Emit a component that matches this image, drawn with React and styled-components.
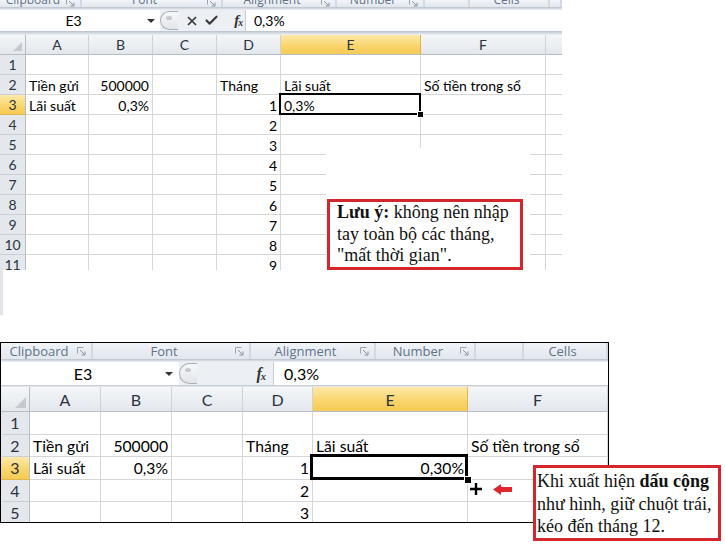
import React from 'react';
import styled, { createGlobalStyle, css } from 'styled-components';
import { X, Check } from 'lucide-react';

const GlobalStyle = createGlobalStyle`
  html, body { margin: 0; padding: 0; background: #fff; }
  body { font-family: Lato, "Open Sans", sans-serif; color: #000; }
`;

const Page = styled.div`
  position: relative;
  width: 725px;
  height: 546px;
  overflow: hidden;
  display: flex;
  flex-direction: column;
  align-items: flex-start;
`;

/* ---------- screenshot shells ---------- */
const TopShot = styled.div`
  position: relative;
  width: 562px;
  height: 270px;
  overflow: hidden;
  display: flex;
  flex-direction: column;
`;

const Stub = styled.div`
  width: 3px;
  height: 45px;
  background: #e1e4e9;
`;

const BottomWrap = styled.div`
  position: relative;
  margin-top: 27px;
`;

const Frame = styled.div`
  box-sizing: border-box;
  width: 609px;
  height: 181px;
  border: 1px solid #000;
  overflow: hidden;
  display: flex;
  flex-direction: column;
`;

/* ---------- ribbon group labels ---------- */
const RibbonLabels = styled.div`
  display: flex;
  height: ${p => p.$h}px;
  flex: none;
  overflow: hidden;
  background: linear-gradient(#f1f4f8, #e2e7ee);
  font-family: "Open Sans", Lato, sans-serif;
  font-size: ${p => p.$fs}px;
  color: #617188;
`;

const Group = styled.div`
  box-sizing: border-box;
  width: ${p => p.$w}px;
  flex: none;
  display: flex;
  align-items: ${p => (p.$clip ? 'flex-end' : 'center')};
  border-right: 2px solid #d3d9e1;
  padding-right: 5px;
`;

const GroupLabel = styled.span`
  flex: 1;
  text-align: center;
  line-height: ${p => (p.$clip ? '20px' : '1')};
  margin-bottom: ${p => (p.$clip ? '-3px' : '0')};
  white-space: nowrap;
`;

const Launcher = () => (
  <svg width="9" height="9" viewBox="0 0 9 9" style={{ flex: 'none' }}>
    <path d="M0.5 0.5h6M0.5 0.5v6" stroke="#9aa6b5" fill="none" />
    <path d="M3 3l4.5 4.5M8 4.5v3.5H4.5" stroke="#8593a6" fill="none" />
  </svg>
);

const Divider = styled.div`
  height: ${p => p.$h}px;
  flex: none;
  background: linear-gradient(#b8c0ca, #d5dae0 50%, #eef0f3);
`;

/* ---------- formula bar ---------- */
const FormulaBar = styled.div`
  display: flex;
  height: ${p => p.$h}px;
  flex: none;
  background: #eceff3;
  font-size: ${p => p.$fs}px;
`;

const NameBox = styled.div`
  box-sizing: border-box;
  width: ${p => p.$w}px;
  flex: none;
  display: flex;
  align-items: center;
  background: #fff;
  padding-right: ${p => p.$pr}px;
`;

const NameText = styled.span`
  flex: 1;
  text-align: center;
`;

const DropArrow = styled.span`
  width: 0;
  height: 0;
  border-left: 4px solid transparent;
  border-right: 4px solid transparent;
  border-top: 4px solid #333;
`;

const Pill = styled.div`
  position: relative;
  box-sizing: border-box;
  width: ${p => p.$w}px;
  flex: none;
  margin: 1px 0;
  border: 1px solid #a9b0b9;
  border-right: none;
  border-radius: 12px 0 0 12px;
  background: linear-gradient(#f7f8fa, #e2e5e9);
  &::after {
    content: '';
    position: absolute;
    left: 5px;
    top: 4px;
    width: 6px;
    height: 4px;
    border-radius: 50%;
    background: #c4c9cf;
  }
`;

const Tools = styled.div`
  flex: 1;
  display: flex;
  align-items: center;
  justify-content: flex-end;
  gap: ${p => p.$gap}px;
  padding-right: ${p => p.$pr}px;
  color: #3b3b3b;
`;

const ToolIcon = styled.span`
  display: flex;
  margin-right: ${p => p.$mr || 0}px;
`;

const Fx = styled.span`
  font-family: "Liberation Serif", serif;
  font-style: italic;
  font-weight: bold;
  font-size: ${p => p.$fs}px;
  color: #333;
  letter-spacing: -1px;
  sub { font-size: 0.65em; vertical-align: -1px; }
`;

const Input = styled.div`
  box-sizing: border-box;
  width: ${p => p.$w}px;
  flex: none;
  display: flex;
  align-items: center;
  background: #fff;
  border-left: 1px solid #c9ced5;
  padding-left: ${p => p.$pl}px;
`;

/* ---------- grid ---------- */
const Grid = styled.div`
  display: grid;
  grid-template-columns: ${p => p.$cols};
  grid-template-rows: ${p => p.$headH}px;
  grid-auto-rows: ${p => p.$rowH}px;
  font-size: ${p => p.$fs}px;
`;

const headBg = css`
  background: linear-gradient(#f4f6f8, #e3e7ec);
`;
const selBg = css`
  background: linear-gradient(#fde9a8, #f9d46a 60%, #f6ca55);
`;

const Corner = styled.div`
  position: relative;
  ${headBg};
  border-right: 1px solid #b6bdc6;
  border-bottom: 1px solid #b6bdc6;
  &::after {
    content: '';
    position: absolute;
    right: 3px;
    bottom: 3px;
    border-left: ${p => p.$t}px solid transparent;
    border-bottom: ${p => p.$t}px solid #c5cad1;
  }
`;

const ColHead = styled.div`
  display: flex;
  align-items: center;
  justify-content: center;
  ${p => (p.$sel ? selBg : headBg)};
  border-right: 1px solid ${p => (p.$sel ? '#e2b54a' : '#cdd2d9')};
  border-bottom: 1px solid #b6bdc6;
  color: #2b3440;
  font-size: ${p => p.$fs}px;
`;

const RowHead = styled.div`
  display: flex;
  align-items: center;
  justify-content: center;
  ${p => (p.$sel ? selBg : css`background: #e4e8ed;`)};
  border-right: 1px solid #b6bdc6;
  border-bottom: 1px solid ${p => (p.$sel ? '#e2b54a' : '#cbd0d7')};
  color: #2b3440;
  font-size: ${p => p.$fs}px;
`;

const Cell = styled.div`
  position: relative;
  display: flex;
  align-items: center;
  justify-content: ${p => (p.$right ? 'flex-end' : 'flex-start')};
  padding: 1px 3px 0 3px;
  border-right: 1px solid #d6d6d6;
  border-bottom: 1px solid #d6d6d6;
  white-space: nowrap;
  min-width: 0;
  ${p =>
    p.$sel &&
    css`
      &::after {
        content: '';
        position: absolute;
        left: -${p.$sel}px;
        top: -${p.$sel}px;
        right: -1px;
        bottom: -1px;
        border: ${p.$sel}px solid #000;
        z-index: 2;
      }
      &::before {
        content: '';
        position: absolute;
        right: -${p.$sel + 2}px;
        bottom: -${p.$sel + 2}px;
        width: ${p.$sel + 3}px;
        height: ${p.$sel + 3}px;
        background: #000;
        border: 1px solid #fff;
        z-index: 3;
      }
    `}
`;

const Sheet = ({ cols, headH, rowH, fs, hfs, rows, selCol, selRow, selW, tri }) => (
  <Grid $cols={cols.map(c => c.w + 'px').join(' ')} $headH={headH} $rowH={rowH} $fs={fs}>
    <Corner $t={tri} />
    {cols.slice(1).map((c, i) => (
      <ColHead key={i} $sel={i === selCol} $fs={hfs}>{c.l}</ColHead>
    ))}
    {rows.map((r, ri) => (
      <React.Fragment key={ri}>
        <RowHead $sel={ri + 1 === selRow} $fs={hfs}>{ri + 1}</RowHead>
        {cols.slice(1).map((c, ci) => {
          const v = r[ci];
          const isSel = ri + 1 === selRow && ci === selCol;
          return (
            <Cell key={ci} $right={v && v.r} $sel={isSel ? selW : 0}>
              {v ? v.t : ''}
            </Cell>
          );
        })}
      </React.Fragment>
    ))}
  </Grid>
);

/* ---------- callouts ---------- */
const Patch = styled.div`
  position: absolute;
  left: 326px;
  top: 148px;
  width: 204px;
  height: 122px;
  background: #fff;
  display: flex;
  flex-direction: column;
  justify-content: flex-end;
  padding-left: 1px;
  box-sizing: border-box;
  z-index: 5;
`;

const NoteBox = styled.div`
  box-sizing: border-box;
  width: ${p => p.$w}px;
  height: ${p => p.$h}px;
  border: 3px solid #d6262d;
  background: #fff;
  padding: ${p => p.$pad};
  font-family: "Liberation Serif", "Times New Roman", serif;
  font-size: 18px;
  line-height: ${p => p.$lh}px;
  color: #111;
  white-space: nowrap;
  b { font-weight: bold; }
`;

const Callout2 = styled.div`
  position: absolute;
  left: 533px;
  top: 123px;
  z-index: 5;
`;

const Marks = styled.div`
  position: absolute;
  left: 469px;
  top: 140px;
  display: flex;
  align-items: center;
  gap: 10px;
  z-index: 4;
`;

const topCols = [
  { w: 26 }, { w: 63, l: 'A' }, { w: 64, l: 'B' }, { w: 64, l: 'C' }, { w: 64, l: 'D' },
  { w: 140, l: 'E' }, { w: 125, l: 'F' }, { w: 30, l: '' },
];

const botCols = [
  { w: 29 }, { w: 71, l: 'A' }, { w: 71, l: 'B' }, { w: 71, l: 'C' }, { w: 70, l: 'D' },
  { w: 155, l: 'E' }, { w: 140, l: 'F' },
];

const R = t => ({ t, r: true });
const L = t => ({ t });

const topRows = [
  [],
  [L('Tiền gửi'), R('500000'), null, L('Tháng'), L('Lãi suất'), L('Số tiền trong sổ')],
  [L('Lãi suất'), R('0,3%'), null, R('1'), L('0,3%')],
  ...[2, 3, 4, 5, 6, 7, 8, 9].map(n => [null, null, null, R(String(n))]),
];

const botRows = [
  [],
  [L('Tiền gửi'), R('500000'), null, L('Tháng'), L('Lãi suất'), L('Số tiền trong sổ')],
  [L('Lãi suất'), R('0,3%'), null, R('1'), R('0,30%')],
  [null, null, null, R('2')],
  [null, null, null, R('3')],
];

const topGroups = [
  { w: 82, l: 'Clipboard', k: true }, { w: 141, l: 'Font', k: true }, { w: 114, l: 'Alignment', k: true },
  { w: 88, l: 'Number', k: true }, { w: 45, l: '' }, { w: 80, l: 'Cells' }, { w: 12, l: '' },
];
const botGroups = [
  { w: 92, l: 'Clipboard', k: true }, { w: 158, l: 'Font', k: true }, { w: 125, l: 'Alignment', k: true },
  { w: 100, l: 'Number', k: true }, { w: 48, l: '' }, { w: 84, l: 'Cells' },
];

const Labels = ({ groups, h, fs, clip }) => (
  <RibbonLabels $h={h} $fs={fs}>
    {groups.map((g, i) => (
      <Group key={i} $w={g.w} $clip={clip}>
        <GroupLabel $clip={clip}>{g.l}</GroupLabel>
        {g.k && <Launcher />}
      </Group>
    ))}
  </RibbonLabels>
);

export default function App() {
  return (
    <>
      <GlobalStyle />
      <Page>
        <TopShot>
          <Labels groups={topGroups} h={7} fs={12} clip />
          <Divider $h={3} />
          <FormulaBar $h={21} $fs={14}>
            <NameBox $w={160} $pr={5}>
              <NameText>E3</NameText>
              <DropArrow />
            </NameBox>
            <Pill $w={18} />
            <Tools $gap={5} $pr={3}>
              <ToolIcon><X size={14} strokeWidth={3} /></ToolIcon>
              <ToolIcon $mr={10}><Check size={15} strokeWidth={3.4} /></ToolIcon>
              <Fx $fs={15}>f<sub>x</sub></Fx>
            </Tools>
            <Input $w={317} $pl={8}>0,3%</Input>
          </FormulaBar>
          <Divider $h={4} />
          <Sheet cols={topCols} headH={20} rowH={20} fs={14} hfs={14}
            rows={topRows} selCol={4} selRow={3} selW={2} tri={9} />
          <Patch>
            <NoteBox $w={196} $h={71} $lh={21.5} $pad="0 0 0 7px">
              <b>Lưu ý:</b> không nên nhập<br />tay toàn bộ các tháng,<br />"mất thời gian".
            </NoteBox>
          </Patch>
        </TopShot>
        <Stub />
        <BottomWrap>
          <Frame>
            <Labels groups={botGroups} h={16} fs={13} />
            <Divider $h={3} />
            <FormulaBar $h={23} $fs={16}>
              <NameBox $w={178} $pr={6}>
                <NameText>E3</NameText>
                <DropArrow />
              </NameBox>
              <Pill $w={18} />
              <Tools $gap={6} $pr={8}>
                <Fx $fs={16}>f<sub>x</sub></Fx>
              </Tools>
              <Input $w={335} $pl={10}>0,3%</Input>
            </FormulaBar>
            <Divider $h={2} />
            <Sheet cols={botCols} headH={25} rowH={22.5} fs={15.7} hfs={16}
              rows={botRows} selCol={4} selRow={3} selW={3} tri={11} />
          </Frame>
          <Marks>
            <svg width="14" height="14" viewBox="0 0 14 14">
              <path d="M7 1v12M1 7h12" stroke="#000" strokeWidth="2.4" />
            </svg>
            <svg width="20" height="11" viewBox="0 0 20 11">
              <path d="M0 5.5L8 0v3h11v5H8v3z" fill="#e0262c" />
            </svg>
          </Marks>
          <Callout2>
            <NoteBox $w={188} $h={76} $lh={22.5} $pad="2px 0 0 1px">
              Khi xuất hiện <b>dấu cộng</b><br />như hình, giữ chuột trái,<br />kéo đến tháng 12.
            </NoteBox>
          </Callout2>
        </BottomWrap>
      </Page>
    </>
  );
}
